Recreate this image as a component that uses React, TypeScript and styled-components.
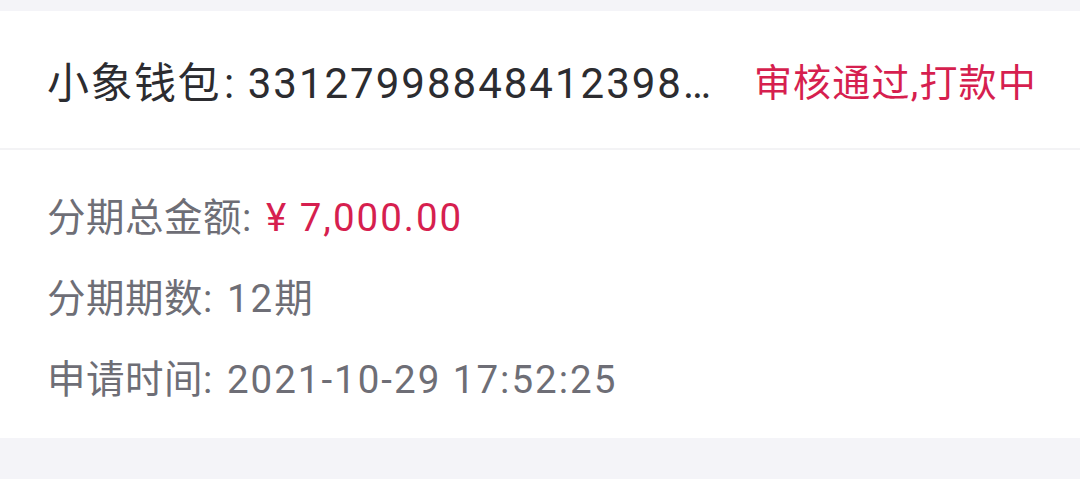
import React from "react";
import styled, { createGlobalStyle } from "styled-components";

const GlobalStyle = createGlobalStyle`
  html, body {
    margin: 0;
    padding: 0;
    background: #f4f4f8;
  }
  body {
    font-family: Roboto, "Noto Sans CJK SC", "Noto Sans", sans-serif;
  }
`;

const Page = styled.div`
  width: 1080px;
  height: 479px;
  padding-top: 11px;
  box-sizing: border-box;
  background: #f4f4f8;
`;

const Card = styled.div`
  background: #ffffff;
`;

const Header = styled.div`
  height: 137px;
  display: flex;
  align-items: center;
  justify-content: space-between;
  padding: 0 43px 0 47px;
  border-bottom: 2px solid #f3f3f5;
`;

const Title = styled.div`
  font-size: 42px;
  letter-spacing: 1.5px;
  color: #2c2c30;
  white-space: nowrap;
  overflow: hidden;
  text-overflow: ellipsis;
  min-width: 0;
`;

const Colon = styled.span`
  margin-left: 3px;
`;

const Account = styled.span`
  margin-left: 12px;
  letter-spacing: 2px;
`;

const Status = styled.div`
  flex-shrink: 0;
  margin-left: 20px;
  font-size: 38px;
  letter-spacing: 1.2px;
  color: #d61f4f;
  white-space: nowrap;
`;

const Body = styled.div`
  display: flex;
  flex-direction: column;
  gap: 27px;
  padding: 41px 46px 31px 47px;
`;

const Row = styled.div`
  font-size: 38.5px;
  letter-spacing: 0.5px;
  line-height: 54px;
  color: #6e6e76;
  white-space: nowrap;
`;

const Value = styled.span<{ $accent?: boolean }>`
  margin-left: 4px;
  letter-spacing: 2px;
  color: ${({ $accent }) => ($accent ? "#d61f4f" : "#6e6e76")};
`;

type Item = { label: string; value: string; accent?: boolean };

const items: Item[] = [
  { label: "分期总金额", value: "¥ 7,000.00", accent: true },
  { label: "分期期数", value: "12期" },
  { label: "申请时间", value: "2021-10-29 17:52:25" },
];

export default function App() {
  return (
    <>
      <GlobalStyle />
      <Page>
        <Card>
          <Header>
            <Title>
              小象钱包<Colon>:</Colon>
              <Account>33127998848412398…</Account>
            </Title>
            <Status>审核通过,打款中</Status>
          </Header>
          <Body>
            {items.map((it) => (
              <Row key={it.label}>
                {it.label}: <Value $accent={it.accent}>{it.value}</Value>
              </Row>
            ))}
          </Body>
        </Card>
      </Page>
    </>
  );
}
